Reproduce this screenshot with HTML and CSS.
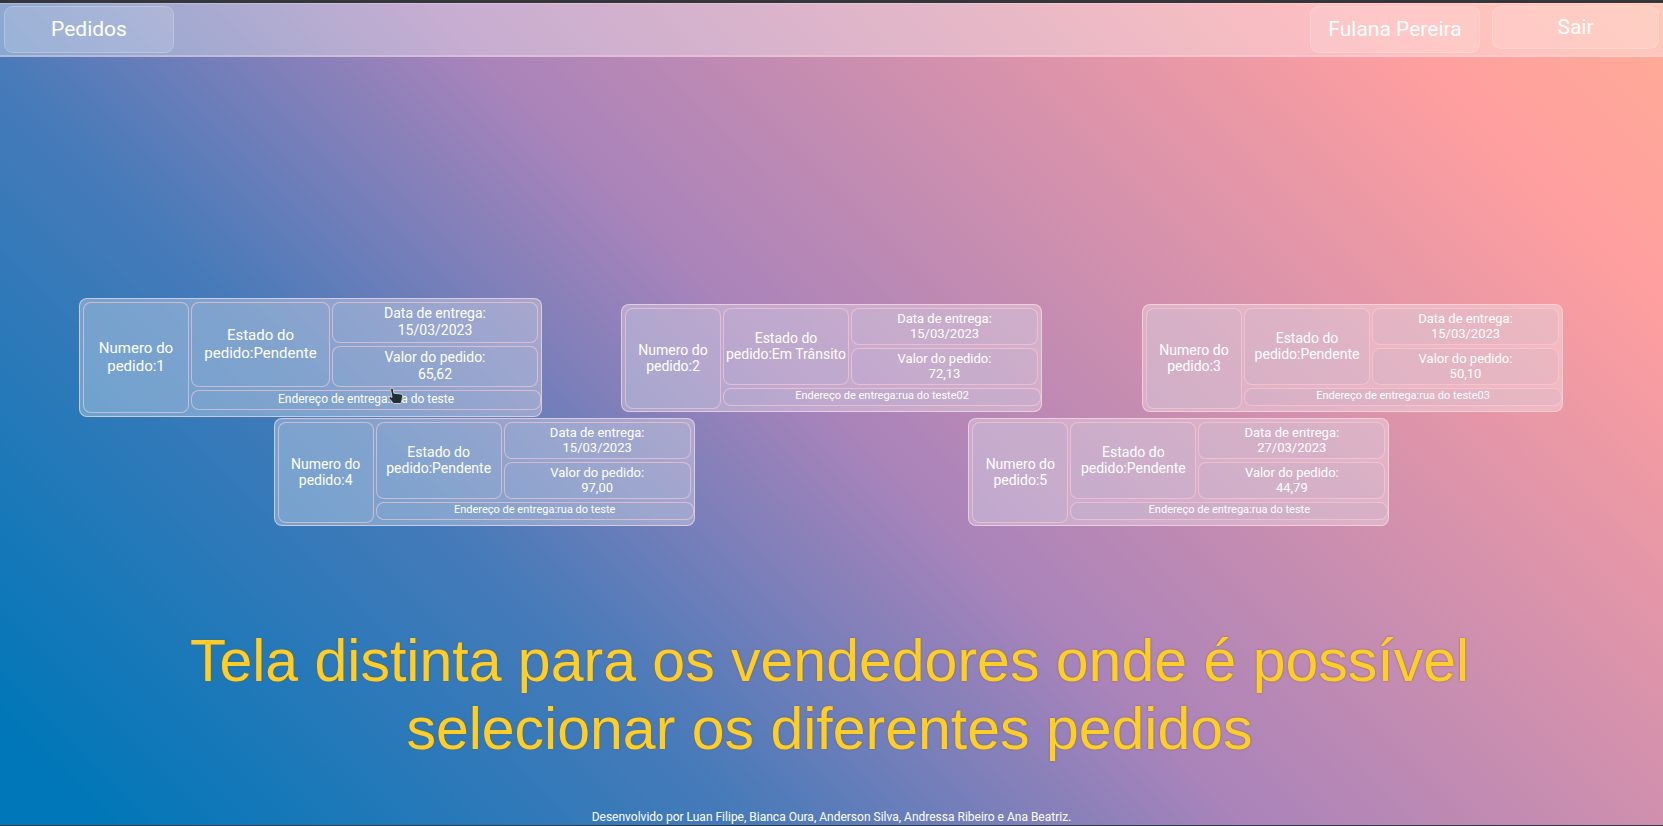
FILE: index.html
```
<!DOCTYPE html>
<html lang="pt-BR">
<head>
<meta charset="utf-8">
<title>Pedidos</title>
<link rel="stylesheet" href="styles.css">
</head>
<body>
<div class="page">
  <header class="topbar">
    <button class="nav-button" type="button">Pedidos</button>
    <div class="session">
      <button class="nav-button" type="button">Fulana Pereira</button>
      <button class="nav-button nav-button-exit" type="button">Sair</button>
    </div>
  </header>

  <main class="orders">
    <article class="order order-active">
      <div class="cell number">Numero do<br>pedido:1</div>
      <div class="cell state">Estado do<br>pedido:Pendente</div>
      <div class="cell date">Data de entrega:<br>15/03/2023</div>
      <div class="cell value">Valor do pedido:<br>65,62</div>
      <div class="cell address">Endereço de entrega:rua do teste</div>
      <svg class="pointer" viewBox="0 0 16 18" aria-hidden="true">
        <path d="M3 1.2 Q4.8 .4 5.3 2.2 L5.9 6.2 L13 7 Q14.8 7.3 14.6 9.2 L14 13 L12.8 16.5 L5.5 16.5 L1.2 11.5 Q.6 9.8 2.2 9.4 L4 10.4 L2.6 2.8 Z"/>
      </svg>
    </article>
    <article class="order">
      <div class="cell number">Numero do<br>pedido:2</div>
      <div class="cell state">Estado do<br>pedido:Em Trânsito</div>
      <div class="cell date">Data de entrega:<br>15/03/2023</div>
      <div class="cell value">Valor do pedido:<br>72,13</div>
      <div class="cell address">Endereço de entrega:rua do teste02</div>
    </article>
    <article class="order">
      <div class="cell number">Numero do<br>pedido:3</div>
      <div class="cell state">Estado do<br>pedido:Pendente</div>
      <div class="cell date">Data de entrega:<br>15/03/2023</div>
      <div class="cell value">Valor do pedido:<br>50,10</div>
      <div class="cell address">Endereço de entrega:rua do teste03</div>
    </article>
    <article class="order">
      <div class="cell number">Numero do<br>pedido:4</div>
      <div class="cell state">Estado do<br>pedido:Pendente</div>
      <div class="cell date">Data de entrega:<br>15/03/2023</div>
      <div class="cell value">Valor do pedido:<br>97,00</div>
      <div class="cell address">Endereço de entrega:rua do teste</div>
    </article>
    <article class="order">
      <div class="cell number">Numero do<br>pedido:5</div>
      <div class="cell state">Estado do<br>pedido:Pendente</div>
      <div class="cell date">Data de entrega:<br>27/03/2023</div>
      <div class="cell value">Valor do pedido:<br>44,79</div>
      <div class="cell address">Endereço de entrega:rua do teste</div>
    </article>
  </main>

  <p class="caption">Tela distinta para os vendedores onde é possível<br>selecionar os diferentes pedidos</p>

  <footer class="credits">Desenvolvido por Luan Filipe, Bianca Oura, Anderson Silva, Andressa Ribeiro e Ana Beatriz.</footer>
</div>
</body>
</html>
```

FILE: styles.css
```
* {
  box-sizing: border-box;
}

body {
  margin: 0;
  color: #fff;
  font-family: Roboto, "Liberation Sans", sans-serif;
}

.page {
  position: relative;
  display: flex;
  flex-direction: column;
  min-height: 100vh;
  border-top: 3px solid #35363a;
  border-bottom: 1px solid #303c48;
  background: linear-gradient(45deg, #0077b8 4%, #467ab9 30%, #a983ba 50%, #ff9f9f 88%, #ffac96 100%);
}

.topbar {
  display: flex;
  justify-content: space-between;
  align-items: flex-start;
  padding: 2px 4px;
  border-top: 1px solid rgba(255, 255, 255, 0.2);
  border-bottom: 2px solid rgba(255, 220, 230, 0.35);
  background: rgba(255, 255, 255, 0.34);
}

.session {
  display: flex;
  align-items: flex-start;
  gap: 12px;
}

.nav-button {
  width: 170px;
  height: 47px;
  padding: 0 0 2px;
  border: 1px solid rgba(255, 255, 255, 0.22);
  border-radius: 9px;
  background: rgba(255, 255, 255, 0.13);
  color: #fff;
  font: 21px/24px Roboto, "Liberation Sans", sans-serif;
}

.nav-button-exit {
  width: 167px;
  height: 43px;
}

.orders {
  flex: 1;
  display: flex;
  flex-wrap: wrap;
  justify-content: space-evenly;
  align-content: center;
  row-gap: 6px;
  padding-bottom: 38px;
}

.order {
  display: grid;
  grid-template-columns: 96px 126px 187px;
  grid-template-rows: 37px 37px 18px;
  column-gap: 2px;
  row-gap: 3px;
  width: 421px;
  height: 108px;
  padding: 3px 0 3px 3px;
  border: 1px solid rgba(255, 222, 232, 0.65);
  border-radius: 8px;
  background: rgba(255, 255, 255, 0.31);
}

.cell {
  display: flex;
  align-items: center;
  justify-content: center;
  border: 1px solid rgba(255, 205, 215, 0.6);
  border-radius: 8px;
  background: rgba(150, 165, 205, 0.1);
  text-align: center;
  white-space: nowrap;
  font-size: 13px;
  line-height: 15px;
}

.number {
  grid-row: 1 / 4;
  height: 101px;
  font-size: 14px;
  line-height: 16px;
}

.state {
  grid-row: 1 / 3;
  font-size: 14px;
  line-height: 16px;
}

.date,
.value {
  grid-column: 3;
}

.address {
  grid-column: 2 / 4;
  margin-right: -3px;
  padding-bottom: 1px;
  font-size: 11px;
  line-height: 14px;
}

.order-active {
  position: relative;
  grid-template-columns: 106px 139px 206px;
  grid-template-rows: 41px 41px 20px;
  width: 463px;
  height: 119px;
  margin: -6px -21px -5px;
}

.order-active .cell {
  font-size: 14px;
  line-height: 17px;
}

.order-active .number,
.order-active .state {
  font-size: 15px;
  line-height: 18px;
}

.order-active .number {
  height: 111px;
}

.order-active .address {
  font-size: 12px;
  line-height: 16px;
}

.pointer {
  position: absolute;
  left: 308px;
  top: 88px;
  width: 16px;
  height: 18px;
  fill: #22312f;
  stroke: #c9cfda;
  stroke-width: 1;
}

.caption {
  position: absolute;
  right: 4px;
  bottom: 62px;
  left: 0;
  margin: 0;
  color: #fdce2b;
  text-align: center;
  font: 59px/68px "Liberation Sans", Arial, sans-serif;
  text-shadow: 0 0 2px rgba(110, 100, 40, 0.8);
}

.credits {
  text-align: center;
  font-size: 12px;
  line-height: 15px;
}
```
